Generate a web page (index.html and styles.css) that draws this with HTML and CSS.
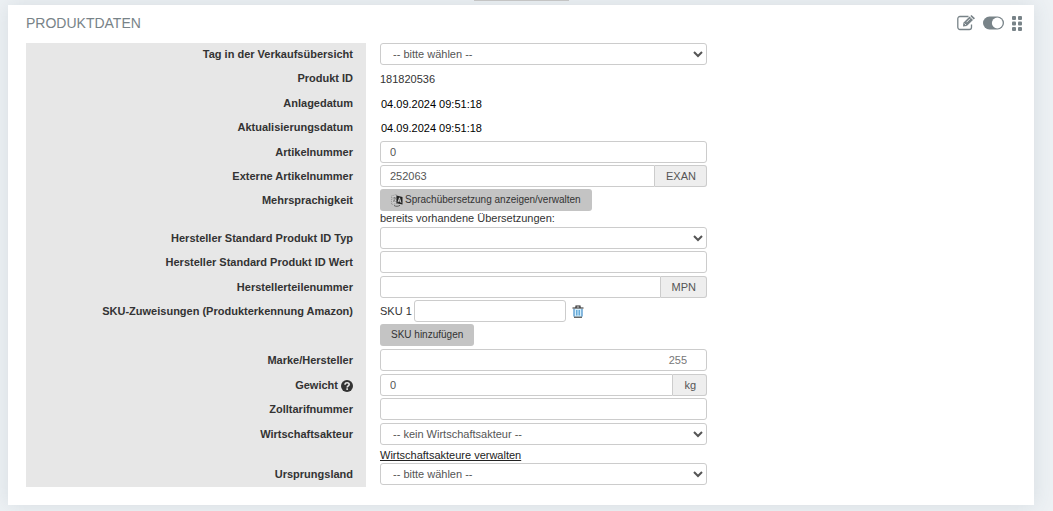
FILE: index.html
```html
<!DOCTYPE html>
<html lang="de">
<head>
<meta charset="utf-8">
<title>Produktdaten</title>
<link rel="stylesheet" href="styles.css">
</head>
<body>
<div class="edge-tab"></div>
<main class="panel">
  <header class="panel-head">
    <h1 class="title">PRODUKTDATEN</h1>
    <div class="tools">
      <button class="tool" type="button" aria-label="Bearbeiten"><svg width="19" height="16" viewBox="0 0 19 16" fill="none" stroke="#788388"><path d="M14.500 9.500v2.800a2.200 2.200 0 0 1-2.200 2.200H3a2.200 2.200 0 0 1-2.200-2.200V3.700A2.200 2.200 0 0 1 3 1.500h8.500" stroke-width="1.300"/><path d="M6 11.500l.4-3.800 6.200-6.200 3.400 3.400-6.200 6.200z" fill="#788388" stroke="none"/><path d="M13.300 1l1.200-1 3.500 3.300-1.300 1.200z" fill="#788388" stroke="none"/><path d="M7.500 8.500l1.700 1.700M9.600 7.200l3.500-3.500" stroke="#fff" stroke-width=".8"/></svg></button>
      <button class="tool" type="button" aria-label="Umschalten"><svg width="21" height="14" viewBox="0 0 21 14"><rect y=".5" width="21" height="13" rx="6.500" fill="#788388"/><circle cx="14.300" cy="7" r="5.400" fill="#fff"/></svg></button>
      <button class="tool" type="button" aria-label="Verschieben"><svg width="11" height="15" viewBox="0 0 11 15" fill="#788388"><rect x="1" width="4" height="4" rx="1"/><rect x="7" width="4" height="4" rx="1"/><rect x="1" y="5.500" width="4" height="4" rx="1"/><rect x="7" y="5.500" width="4" height="4" rx="1"/><rect x="1" y="11" width="4" height="4" rx="1"/><rect x="7" y="11" width="4" height="4" rx="1"/></svg></button>
    </div>
  </header>
  <form class="form">
    <div class="row"><label class="label" for="tag">Tag in der Verkaufsübersicht</label><div class="field"><select class="control" id="tag"><option>-- bitte wählen --</option></select></div></div>
    <div class="row"><span class="label">Produkt ID</span><div class="field"><span class="value">181820536</span></div></div>
    <div class="row"><span class="label">Anlagedatum</span><div class="field"><span class="value date">04.09.2024 09:51:18</span></div></div>
    <div class="row"><span class="label">Aktualisierungsdatum</span><div class="field"><span class="value date">04.09.2024 09:51:18</span></div></div>
    <div class="row"><label class="label" for="art">Artikelnummer</label><div class="field"><input class="control" id="art" value="0"></div></div>
    <div class="row"><label class="label" for="ext">Externe Artikelnummer</label><div class="field"><div class="group"><input class="control" id="ext" value="252063"><span class="addon">EXAN</span></div></div></div>
    <div class="row languages"><span class="label">Mehrsprachigkeit</span><div class="field"><button class="button" type="button"><svg width="12" height="13" viewBox="0 0 12 13"><path d="M.5 2l5-1.500v9l-5 1z" fill="#ccc" stroke="#777" stroke-width=".7" stroke-dasharray="1 1"/><path d="M1.500 4h3.500M3.500 3v1M1.800 8c1.500-1 2.200-2.500 2.400-4M2 5.500L4.500 8" stroke="#666" stroke-width=".7" fill="none"/><path d="M5.500 1.500l6 1.500v7.500l-6-1.200z" fill="#222"/><path d="M7 8.200l1.500-4.400L10 8.800M7.500 6.800l2 .3" stroke="#ddd" stroke-width=".9" fill="none"/><path d="M3 11.500c2 1.200 4 1 6-.2" stroke="#444" stroke-width=".8" fill="none"/></svg><span>Sprachübersetzung anzeigen/verwalten</span></button><span class="note">bereits vorhandene Übersetzungen:</span></div></div>
    <div class="row"><label class="label" for="typ">Hersteller Standard Produkt ID Typ</label><div class="field"><select class="control" id="typ"><option></option></select></div></div>
    <div class="row"><label class="label" for="wert">Hersteller Standard Produkt ID Wert</label><div class="field"><input class="control" id="wert"></div></div>
    <div class="row"><label class="label" for="mpn">Herstellerteilenummer</label><div class="field"><div class="group"><input class="control" id="mpn"><span class="addon">MPN</span></div></div></div>
    <div class="row skus"><span class="label">SKU-Zuweisungen (Produkterkennung Amazon)</span><div class="field"><div class="sku"><label for="sku">SKU 1</label><input class="control" id="sku"><button class="trash" type="button" aria-label="SKU löschen"><svg width="12" height="13" viewBox="0 0 12 13" fill="none"><path d="M1.500 3.500h9V12h-9z" fill="#d6effc"/><path d="M2 4v7.500M10 4v7.500" stroke="#2f7fc0"/><path d="M2 12.200h8" stroke="#222"/><path d="M4.500 5v5.500M6 5v5.500M7.500 5v5.500" stroke="#4a9bd0" stroke-width=".8"/><path d="M.5 3h11M4 2.500V1h4v1.500" stroke="#222" stroke-width="1.100"/></svg></button></div><button class="button" type="button">SKU hinzufügen</button></div></div>
    <div class="row"><label class="label" for="marke">Marke/Hersteller</label><div class="field"><input class="control counter" id="marke" placeholder="255"></div></div>
    <div class="row"><label class="label" for="gewicht">Gewicht <svg class="help" width="12" height="12" viewBox="0 0 12 12"><circle cx="6" cy="6" r="6" fill="#333"/><path d="M4 4.700C4 3.300 5 2.700 6.100 2.700S8.200 3.400 8.200 4.500C8.200 6 6.200 5.900 6.200 7.400" fill="none" stroke="#e7e7e7" stroke-width="1.600"/><rect x="5.300" y="8.300" width="1.700" height="1.600" fill="#e7e7e7"/></svg></label><div class="field"><div class="group"><input class="control" id="gewicht" value="0"><span class="addon">kg</span></div></div></div>
    <div class="row"><label class="label" for="zoll">Zolltarifnummer</label><div class="field"><input class="control" id="zoll"></div></div>
    <div class="row actor"><label class="label" for="akteur">Wirtschaftsakteur</label><div class="field"><select class="control" id="akteur"><option>-- kein Wirtschaftsakteur --</option></select><a class="link" href="#">Wirtschaftsakteure verwalten</a></div></div>
    <div class="row"><label class="label" for="land">Ursprungsland</label><div class="field"><select class="control" id="land"><option>-- bitte wählen --</option></select></div></div>
  </form>
</main>
</body>
</html>
```
FILE: styles.css
```css
* { box-sizing: border-box; }
body {
  margin: 0;
  padding: 5px 19px 6px 8px;
  background: #edf1f4;
  color: #333;
  font: 11px/16px "Liberation Sans", Arial, sans-serif;
}
input, select, button { font: inherit; color: inherit; margin: 0; }
.edge-tab {
  position: absolute;
  top: 0;
  left: 45%;
  width: 9%;
  height: 1px;
  background: #c4c4c4;
}
.panel {
  padding: 0 18px 18px;
  background: #fff;
  box-shadow: 0 0 20px rgba(60, 80, 95, 0.12);
}
.panel-head {
  display: flex;
  align-items: center;
  justify-content: space-between;
  padding: 10px 0;
}
.title { margin: 0; font-size: 14px; line-height: 16px; font-weight: 400; color: #788388; }
.panel-head { height: 38px; padding: 0 0 2px; }
.tools { display: flex; align-items: center; gap: 7px; margin-right: -6px; }
.tool, .trash { display: flex; padding: 0; border: 0; background: none; }
.form { display: flex; flex-direction: column; min-height: 444px; }
.row {
  display: grid;
  grid-template-columns: 340fr 14px 327fr 309fr;
  flex: 1 0 24px;
}
.languages { flex-basis: 37px; }
.skus { flex-basis: 49px; }
.actor { flex-basis: 39px; }
.label {
  padding: 3px 13px 0 0;
  background: #e7e7e7;
  font-weight: 700;
  text-align: right;
}
.help { vertical-align: -3px; }
.field { grid-column: 3; min-width: 0; }
.value { display: block; padding-top: 4px; }
.date { padding-left: 1px; color: #000; }
.control {
  display: block;
  width: 100%;
  height: 22px;
  padding: 0 9px;
  border: 1px solid #ccc;
  border-radius: 3px;
  background-color: #fff;
  color: #555;
  outline: 0;
}
select.control { padding: 0 1px 0 8px; }
.counter { padding-right: 19px; text-align: right; }
.counter::placeholder { color: #777; }
.group { display: flex; }
.group .control { flex: 1; min-width: 0; border-radius: 3px 0 0 3px; }
.addon {
  height: 22px;
  padding: 2px 10px 0 11px;
  border: 1px solid #ccc;
  border-left: 0;
  border-radius: 0 3px 3px 0;
  background: #eee;
  color: #555;
}
.button {
  display: flex;
  align-items: center;
  gap: 2px;
  height: 22px;
  padding: 0 11px;
  border: 0;
  border-radius: 3px;
  background: #c4c4c4;
  font-size: 10px;
}
.note { display: block; line-height: 15px; }
.sku { display: flex; align-items: center; gap: 2px; margin-bottom: 2px; }
.sku .control { width: 152px; }
.trash { margin-left: 4px; }
.link { display: block; width: max-content; padding-top: 2px; color: #222; }
```
